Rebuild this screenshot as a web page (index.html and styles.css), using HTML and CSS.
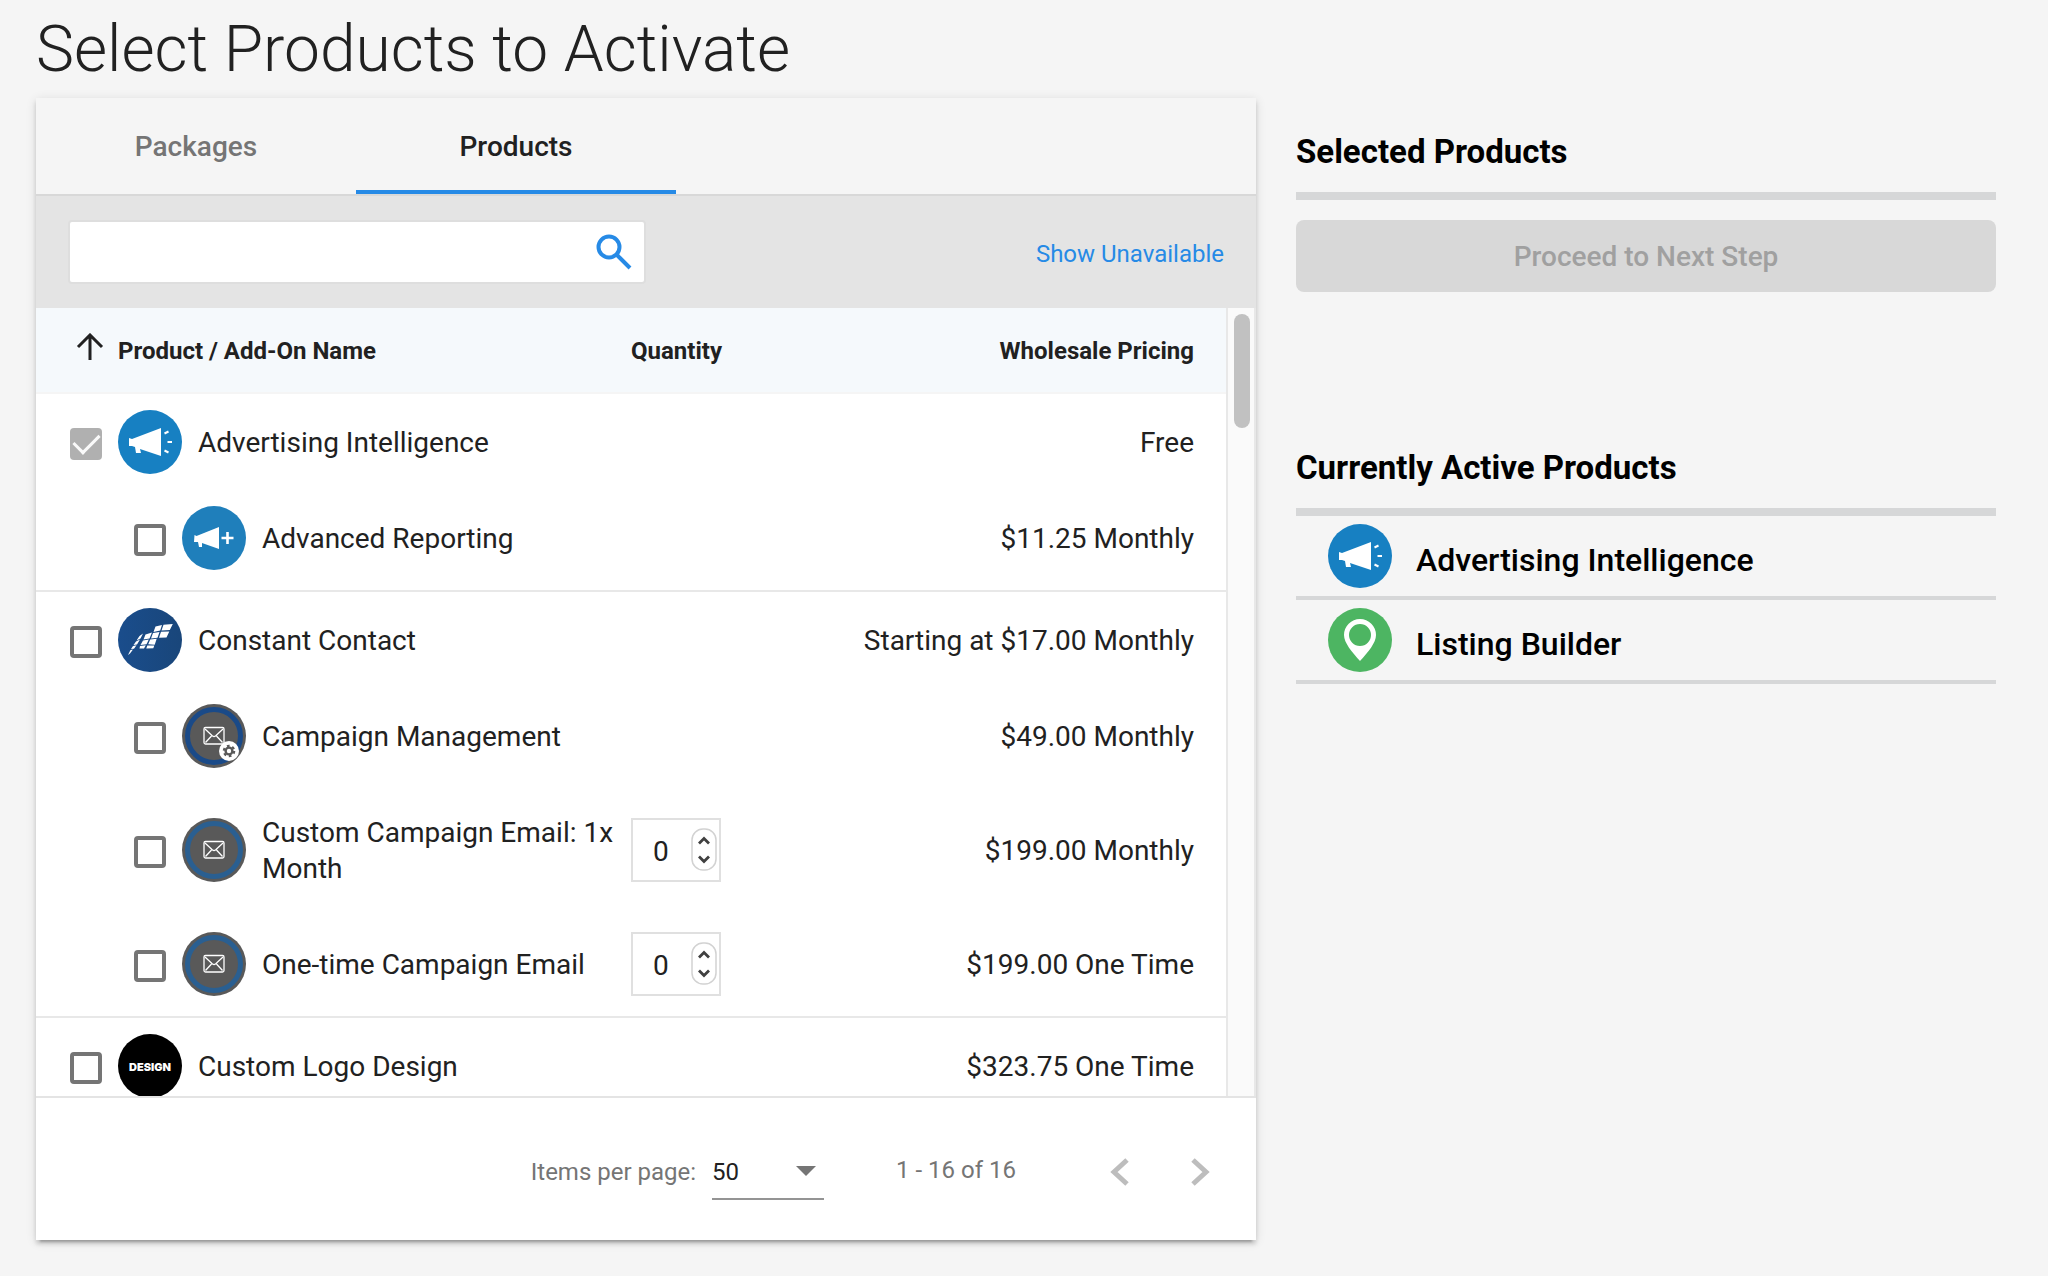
FILE: index.html
```html
<!DOCTYPE html>
<html lang="en">
<head>
    <meta charset="UTF-8">
    <meta name="viewport" content="width=device-width, initial-scale=1.0">
    <title>Select Products to Activate</title>
    <link rel="stylesheet" href="styles.css">
</head>
<body>
    <!-- Shared logos -->
    <svg class="sprite" aria-hidden="true">
        <defs>
            <linearGradient id="cc-fill">
                <stop offset="0" stop-color="#1a4d8c"/>
                <stop offset="1" stop-color="#19467a"/>
            </linearGradient>
        </defs>
        <symbol id="logo-megaphone" viewBox="0 0 64 64">
            <circle cx="32" cy="32" r="32" fill="#1780c2"/>
            <path fill="currentColor" d="M11 28l3 1 29-11v28l-21-7 1 4-5 0-1-6-3-1-3 0z"/>
            <path stroke="currentColor" stroke-width="2" d="M46.500 23.500l4-2M49.500 32h4.500M46.500 40.500l4 2"/>
        </symbol>
        <symbol id="logo-megaphone-plus" viewBox="0 0 64 64">
            <circle cx="32" cy="32" r="32" fill="#1f7fbb"/>
            <path fill="currentColor" d="M12.500 29l2 1 22.500-9v22l-17-6 0 4-3 0-1-5-4 0z"/>
            <path stroke="currentColor" stroke-width="2.600" d="M39.500 32h12M45.500 26v12"/>
        </symbol>
        <symbol id="logo-contact" viewBox="0 0 64 64">
            <circle cx="32" cy="32" r="32" fill="url(#cc-fill)"/>
            <path fill="#fff" d="M37.500 18.500l6.500-1.500-1.800 5.500-6.700 1.500zM45.500 16.800l9.300-.800-3 6-8.300.400zM35 25l6.500-1-2 5.800-6.500.700zM43 23.800l8.300-.400-2.800 6-7.500.300zM27.500 26.500l6.500-2-2.500 6-6 1zM25 32.500l5.800-1-2.300 4.800-6 .700zM32.200 31.500l6.500-.700-2 6-6.500-.500zM22 38l5.800-.700-1.800 3.200-4.500 0zM29.300 37.500l7 0-1 2.700-7 .300zM18.500 32.500l3-4.500 3.500-2.500-2.500 5zM15.500 37l2.500-3.500 4-2-3 5zM13 41l2-3 3.500-.800-2.500 3.500zM10 47l2.500-5 2.500-.500-3 4z"/>
        </symbol>
        <symbol id="mail" viewBox="0 0 64 64">
            <rect x="22" y="23.500" width="20" height="16.500" rx="1.500"/>
            <path d="M23 25l7.500 7q1.500 1 3 0L41 25M23.500 38.500l6-6.500M40.500 38.500l-6-6.500"/>
        </symbol>
        <symbol id="logo-mail" viewBox="0 0 64 64">
            <circle cx="32" cy="32" r="32" fill="#595959"/>
            <circle cx="32" cy="32" r="26.500" fill="none" stroke="#2a5f91" stroke-width="5"/>
            <use href="#mail" fill="none" stroke="#fff" stroke-width="1.300"/>
        </symbol>
        <symbol id="logo-mail-gear" viewBox="0 0 64 64">
            <circle cx="32" cy="32" r="32" fill="#595959"/>
            <circle cx="32" cy="32" r="26.500" fill="none" stroke="#1a4a88" stroke-width="5"/>
            <use href="#mail" fill="none" stroke="#fff" stroke-width="1.300"/>
            <circle cx="47" cy="47" r="10" fill="#fff"/>
            <circle cx="47" cy="47" r="3.400" fill="none" stroke="#595959" stroke-width="2.400"/>
            <circle cx="47" cy="47" r="5.200" fill="none" stroke="#595959" stroke-width="2.200" stroke-dasharray="2.700 2.745"/>
        </symbol>
        <symbol id="logo-pin" viewBox="0 0 64 64">
            <circle cx="32" cy="32" r="32" fill="#4db562"/>
            <path fill="#fff" fill-rule="evenodd" d="M32 53C24 44 16 35 16 27a16 16 0 0 1 32 0c0 8-8 17-16 26zM32 16a11 11 0 1 0 0 22 11 11 0 0 0 0-22z"/>
        </symbol>
        <symbol id="stepper" viewBox="0 0 26 44">
            <rect x="1" y="1" width="24" height="41" rx="11" fill="#fff" stroke="#d2d2d2" stroke-width="1.500"/>
            <path fill="none" stroke="#404040" stroke-width="2.800" d="M8 15.500l5-5 5 5M8 28.500l5 5 5-5"/>
        </symbol>
    </svg>

    <h1>Select Products to Activate</h1>

    <main class="layout">
        <section class="card">
            <div class="tabs" role="tablist">
                <button type="button" class="tab" role="tab">Packages</button>
                <button type="button" class="tab active" role="tab" aria-selected="true">Products</button>
            </div>

            <div class="toolbar">
                <div class="search">
                    <input type="text" aria-label="Search products">
                    <svg width="36" height="36" viewBox="0 0 36 36" aria-hidden="true">
                        <circle cx="13" cy="13" r="10.500"/>
                        <path d="M20.500 20.500L34 34"/>
                    </svg>
                </div>
                <a href="#">Show Unavailable</a>
            </div>

            <div class="list">
                <div class="list-scroll">
                    <table>
                        <thead>
                            <tr>
                                <th class="col-name">
                                    <div class="sort">
                                        <svg width="28" height="28" viewBox="0 0 28 28" aria-hidden="true"><path d="M14 27V2M2 14L14 2l12 12"/></svg>
                                        Product / Add-On Name
                                    </div>
                                </th>
                                <th class="col-qty">Quantity</th>
                                <th class="col-price">Wholesale Pricing</th>
                            </tr>
                        </thead>
                        <tbody>
                            <tr>
                                <td>
                                    <label class="product">
                                        <input type="checkbox" checked disabled>
                                        <svg class="logo"><use href="#logo-megaphone"/></svg>
                                        <span>Advertising Intelligence</span>
                                    </label>
                                </td>
                                <td></td>
                                <td class="price">Free</td>
                            </tr>
                            <tr>
                                <td>
                                    <label class="product addon">
                                        <input type="checkbox">
                                        <svg class="logo"><use href="#logo-megaphone-plus"/></svg>
                                        <span>Advanced Reporting</span>
                                    </label>
                                </td>
                                <td></td>
                                <td class="price">$11.25 Monthly</td>
                            </tr>
                        </tbody>
                        <tbody>
                            <tr>
                                <td>
                                    <label class="product">
                                        <input type="checkbox">
                                        <svg class="logo"><use href="#logo-contact"/></svg>
                                        <span>Constant Contact</span>
                                    </label>
                                </td>
                                <td></td>
                                <td class="price">Starting at $17.00 Monthly</td>
                            </tr>
                            <tr>
                                <td>
                                    <label class="product addon">
                                        <input type="checkbox">
                                        <svg class="logo"><use href="#logo-mail-gear"/></svg>
                                        <span>Campaign Management</span>
                                    </label>
                                </td>
                                <td></td>
                                <td class="price">$49.00 Monthly</td>
                            </tr>
                            <tr class="has-qty">
                                <td>
                                    <label class="product addon">
                                        <input type="checkbox">
                                        <svg class="logo"><use href="#logo-mail"/></svg>
                                        <span>Custom Campaign Email: 1x Month</span>
                                    </label>
                                </td>
                                <td>
                                    <div class="qty">
                                        <input type="number" value="0" min="0" aria-label="Custom Campaign Email quantity">
                                        <svg width="26" height="44" aria-hidden="true"><use href="#stepper"/></svg>
                                    </div>
                                </td>
                                <td class="price">$199.00 Monthly</td>
                            </tr>
                            <tr class="has-qty">
                                <td>
                                    <label class="product addon">
                                        <input type="checkbox">
                                        <svg class="logo"><use href="#logo-mail"/></svg>
                                        <span>One-time Campaign Email</span>
                                    </label>
                                </td>
                                <td>
                                    <div class="qty">
                                        <input type="number" value="0" min="0" aria-label="One-time Campaign Email quantity">
                                        <svg width="26" height="44" aria-hidden="true"><use href="#stepper"/></svg>
                                    </div>
                                </td>
                                <td class="price">$199.00 One Time</td>
                            </tr>
                        </tbody>
                        <tbody>
                            <tr>
                                <td>
                                    <label class="product">
                                        <input type="checkbox">
                                        <svg class="logo" viewBox="0 0 64 64" aria-hidden="true">
                                            <circle cx="32" cy="32" r="32" fill="#000"/>
                                            <text x="32" y="37" fill="#fff" text-anchor="middle" class="design-text">DESIGN</text>
                                        </svg>
                                        <span>Custom Logo Design</span>
                                    </label>
                                </td>
                                <td></td>
                                <td class="price">$323.75 One Time</td>
                            </tr>
                        </tbody>
                    </table>
                </div>
                <div class="scrollbar" aria-hidden="true"><div class="thumb"></div></div>
            </div>

            <div class="paginator">
                <label for="page-size">Items per page:</label>
                <div class="page-size">
                    <select id="page-size">
                        <option>50</option>
                    </select>
                </div>
                <span class="range">1 - 16 of 16</span>
                <button type="button" aria-label="Previous page" disabled>
                    <svg width="20" height="28" viewBox="0 0 20 28"><path d="M17 2L4 14l13 12"/></svg>
                </button>
                <button type="button" aria-label="Next page" disabled>
                    <svg width="20" height="28" viewBox="0 0 20 28"><path d="M3 2l13 12L3 26"/></svg>
                </button>
            </div>
        </section>

        <aside>
            <section class="selected">
                <h2>Selected Products</h2>
                <button type="button" class="btn-proceed" disabled>Proceed to Next Step</button>
            </section>
            <section>
                <h2>Currently Active Products</h2>
                <ul class="active-list">
                    <li><svg class="logo"><use href="#logo-megaphone"/></svg><span>Advertising Intelligence</span></li>
                    <li><svg class="logo"><use href="#logo-pin"/></svg><span>Listing Builder</span></li>
                </ul>
            </section>
        </aside>
    </main>
</body>
</html>
```
FILE: styles.css
```css
* {
    margin: 0;
    padding: 0;
    box-sizing: border-box;
}

body {
    font-family: Roboto, "Liberation Sans", sans-serif;
    font-size: 28px;
    line-height: 36px;
    color: #212121;
    background: #f5f5f5;
}

input, select, button {
    font: inherit;
    color: inherit;
    border: none;
    background: none;
}

a {
    color: #268ae6;
    text-decoration: none;
}

.sprite {
    position: absolute;
    width: 0;
    height: 0;
}

h1 {
    padding: 10px 36px 8px;
    font-size: 64px;
    font-weight: 300;
    line-height: 80px;
}

.layout {
    display: grid;
    grid-template-columns: 61fr 35fr;
    gap: 40px;
    align-items: start;
    padding: 0 52px 36px 36px;
}

.card {
    background: #fff;
    box-shadow: 0 6px 2px -4px rgba(0, 0, 0, 0.2), 0 4px 4px rgba(0, 0, 0, 0.14), 0 2px 10px rgba(0, 0, 0, 0.12);
}

/* Tabs */
.tabs {
    display: flex;
    background: #f5f5f5;
    border-bottom: 2px solid #d8d8d8;
}

.tab {
    width: 320px;
    height: 96px;
    padding-top: 6px;
    border-bottom: 4px solid transparent;
    color: #757575;
    font-weight: 500;
}

.tab.active {
    border-bottom-color: #268ae6;
    color: #212121;
}

/* Search bar */
.toolbar {
    display: flex;
    align-items: center;
    justify-content: space-between;
    padding: 24px 32px;
    background: #e4e4e4;
    font-size: 24px;
}

.toolbar a {
    padding-top: 4px;
}

.search {
    display: flex;
    align-items: center;
    width: 578px;
    height: 64px;
    padding-right: 12px;
    background: #fff;
    border: 2px solid #dedede;
    border-radius: 4px;
}

.search input {
    flex: 1;
    height: 100%;
    padding: 0 16px;
    outline: none;
}

.search svg {
    fill: none;
    stroke: #268ae6;
    stroke-width: 4;
}

/* Product table */
.list {
    display: flex;
    height: 790px;
    border-bottom: 2px solid #e4e4e4;
}

.list-scroll {
    flex: 1;
    overflow-y: auto;
    scrollbar-width: none;
}

.scrollbar {
    width: 30px;
    padding: 6px;
    background: #fafafa;
    border: solid #e8e8e8;
    border-width: 0 2px;
}

.thumb {
    width: 16px;
    height: 114px;
    background: #c1c1c1;
    border-radius: 8px;
}

table {
    width: 100%;
    table-layout: fixed;
    border-spacing: 0;
}

th {
    height: 86px;
    padding-top: 2px;
    background: #f5f9fc;
    border-bottom: 2px solid #f5f5f5;
    font-size: 24px;
    font-weight: 700;
    text-align: left;
}

.col-name {
    width: 50%;
}

.col-qty {
    width: 14%;
}

.col-price, .price {
    padding-right: 32px;
    text-align: right;
}

.sort {
    display: flex;
    gap: 14px;
    padding-left: 40px;
}

.sort svg {
    fill: none;
    stroke: #212121;
    stroke-width: 3;
}

td {
    padding-top: 16px;
    padding-bottom: 16px;
}

td.price {
    padding-top: 18px;
}

.has-qty td {
    padding-top: 34px;
}

.has-qty td.price {
    padding-top: 36px;
}

tbody tr:last-child td {
    padding-bottom: 20px;
    border-bottom: 2px solid #e8e8e8;
}

.product {
    display: flex;
    align-items: center;
    gap: 16px;
    height: 64px;
    padding-left: 34px;
}

.product.addon {
    padding-left: 98px;
}

.product span {
    padding-top: 2px;
}

.product input {
    flex: none;
    width: 32px;
    height: 32px;
    margin-top: 4px;
    appearance: none;
    border: 4px solid #757575;
    border-radius: 4px;
}

.product input:checked {
    display: flex;
    justify-content: center;
    border: none;
    background: #b0b0b0;
}

.product input:checked::after {
    content: "";
    width: 12px;
    height: 22px;
    border: solid #fafafa;
    border-width: 0 3px 3px 0;
    transform: rotate(45deg);
}

.logo {
    flex: none;
    display: block;
    width: 64px;
    height: 64px;
    color: #fff;
}

.design-text {
    font: 900 11px Inter, sans-serif;
}

.qty {
    display: flex;
    align-items: center;
    width: 90px;
    height: 64px;
    padding-right: 2px;
    border: 2px solid #e0e0e0;
}

.qty input {
    flex: 1;
    min-width: 0;
    padding: 4px 0 0 20px;
    appearance: textfield;
    outline: none;
}

/* Paginator */
.paginator {
    display: flex;
    align-items: center;
    justify-content: flex-end;
    height: 142px;
    padding: 6px 16px 0 0;
    color: #757575;
    font-size: 24px;
}

.page-size {
    position: relative;
    margin: 0 72px 0 16px;
}

.page-size::after {
    content: "";
    position: absolute;
    top: 22px;
    right: 8px;
    border: 10px solid transparent;
    border-top-color: #757575;
    border-bottom: none;
    pointer-events: none;
}

.page-size select {
    display: block;
    width: 112px;
    height: 56px;
    padding-top: 2px;
    appearance: none;
    border-bottom: 2px solid #949494;
    color: #212121;
}

.range {
    margin-right: 64px;
    padding-bottom: 4px;
}

.paginator button {
    width: 80px;
    height: 80px;
}

.paginator button svg {
    display: block;
    margin: 0 auto;
    fill: none;
    stroke: #bdbdbd;
    stroke-width: 5;
}

/* Side panel */
aside {
    padding-top: 32px;
    color: #000;
    font-size: 32px;
}

.selected {
    margin-bottom: 154px;
}

h2 {
    padding-bottom: 18px;
    border-bottom: 8px solid #d6d7d8;
    font-size: 33px;
    font-weight: 700;
    line-height: 44px;
}

.btn-proceed {
    display: block;
    width: 100%;
    height: 72px;
    margin-top: 20px;
    padding-top: 2px;
    background: #d8d8d8;
    border-radius: 8px;
    color: #a0a0a0;
    font-size: 28px;
    font-weight: 500;
}

.active-list {
    list-style: none;
}

.active-list li {
    display: flex;
    align-items: center;
    gap: 24px;
    padding: 8px 32px;
    border-bottom: 4px solid #d6d7d8;
    font-weight: 500;
}

.active-list span {
    padding-top: 8px;
}
```
